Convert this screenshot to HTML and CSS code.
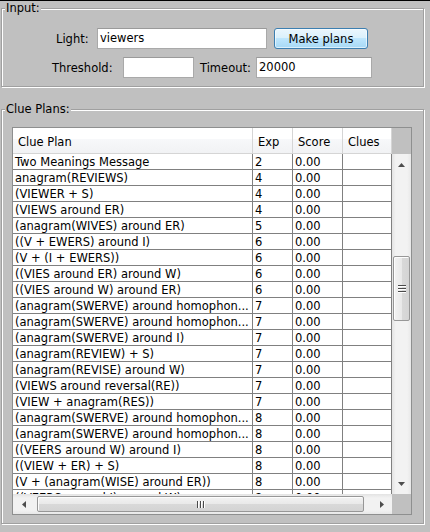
FILE: index.html
```html
<!DOCTYPE html>
<html>
<head>
<meta charset="utf-8">
<title>Clue Plans</title>
<link rel="stylesheet" href="styles.css">
</head>
<body>
<div class="window">
  <div class="group input-group">
    <span class="group-title">Input:</span>
    <div class="form-row row1">
      <span class="lbl lbl-light">Light:</span>
      <div class="field f-light">viewers</div>
      <button class="btn">Make plans</button>
    </div>
    <div class="form-row row2">
      <span class="lbl lbl-threshold">Threshold:</span>
      <div class="field f-threshold"></div>
      <span class="lbl lbl-timeout">Timeout:</span>
      <div class="field f-timeout">20000</div>
    </div>
  </div>

  <div class="group plans-group">
    <span class="group-title">Clue Plans:</span>
    <div class="scrollpane">
      <div class="thead">
        <div class="th">Clue Plan</div>
        <div class="th">Exp</div>
        <div class="th">Score</div>
        <div class="th">Clues</div>
      </div>
      <div class="corner"></div>
      <div class="viewport">
        <div class="tr"><div class="td">Two Meanings Message</div><div class="td">2</div><div class="td">0.00</div><div class="td"></div></div>
        <div class="tr"><div class="td">anagram(REVIEWS)</div><div class="td">4</div><div class="td">0.00</div><div class="td"></div></div>
        <div class="tr"><div class="td">(VIEWER + S)</div><div class="td">4</div><div class="td">0.00</div><div class="td"></div></div>
        <div class="tr"><div class="td">(VIEWS around ER)</div><div class="td">4</div><div class="td">0.00</div><div class="td"></div></div>
        <div class="tr"><div class="td">(anagram(WIVES) around ER)</div><div class="td">5</div><div class="td">0.00</div><div class="td"></div></div>
        <div class="tr"><div class="td">((V + EWERS) around I)</div><div class="td">6</div><div class="td">0.00</div><div class="td"></div></div>
        <div class="tr"><div class="td">(V + (I + EWERS))</div><div class="td">6</div><div class="td">0.00</div><div class="td"></div></div>
        <div class="tr"><div class="td">((VIES around ER) around W)</div><div class="td">6</div><div class="td">0.00</div><div class="td"></div></div>
        <div class="tr"><div class="td">((VIES around W) around ER)</div><div class="td">6</div><div class="td">0.00</div><div class="td"></div></div>
        <div class="tr"><div class="td">(anagram(SWERVE) around homophon...</div><div class="td">7</div><div class="td">0.00</div><div class="td"></div></div>
        <div class="tr"><div class="td">(anagram(SWERVE) around homophon...</div><div class="td">7</div><div class="td">0.00</div><div class="td"></div></div>
        <div class="tr"><div class="td">(anagram(SWERVE) around I)</div><div class="td">7</div><div class="td">0.00</div><div class="td"></div></div>
        <div class="tr"><div class="td">(anagram(REVIEW) + S)</div><div class="td">7</div><div class="td">0.00</div><div class="td"></div></div>
        <div class="tr"><div class="td">(anagram(REVISE) around W)</div><div class="td">7</div><div class="td">0.00</div><div class="td"></div></div>
        <div class="tr"><div class="td">(VIEWS around reversal(RE))</div><div class="td">7</div><div class="td">0.00</div><div class="td"></div></div>
        <div class="tr"><div class="td">(VIEW + anagram(RES))</div><div class="td">7</div><div class="td">0.00</div><div class="td"></div></div>
        <div class="tr"><div class="td">(anagram(SWERVE) around homophon...</div><div class="td">8</div><div class="td">0.00</div><div class="td"></div></div>
        <div class="tr"><div class="td">(anagram(SWERVE) around homophon...</div><div class="td">8</div><div class="td">0.00</div><div class="td"></div></div>
        <div class="tr"><div class="td">((VEERS around W) around I)</div><div class="td">8</div><div class="td">0.00</div><div class="td"></div></div>
        <div class="tr"><div class="td">((VIEW + ER) + S)</div><div class="td">8</div><div class="td">0.00</div><div class="td"></div></div>
        <div class="tr"><div class="td">(V + (anagram(WISE) around ER))</div><div class="td">8</div><div class="td">0.00</div><div class="td"></div></div>
        <div class="tr"><div class="td">((VEERS around I) around W)</div><div class="td">8</div><div class="td">0.00</div><div class="td"></div></div>
      </div>
      <div class="vscroll">
        <div class="sb-btn">
          <svg width="7" height="4" viewBox="0 0 7 4"><polygon points="0,4 3.5,0 7,4" fill="#4d4d4d"/></svg>
        </div>
        <div class="v-before"></div>
        <div class="thumb v-thumb">
          <div class="grip-v"><span></span><span></span><span></span></div>
        </div>
        <div class="sb-fill"></div>
        <div class="sb-btn">
          <svg width="7" height="4" viewBox="0 0 7 4"><polygon points="0,0 7,0 3.5,4" fill="#4d4d4d"/></svg>
        </div>
      </div>
      <div class="hscroll">
        <div class="sb-btn">
          <svg width="4" height="7" viewBox="0 0 4 7"><polygon points="4,0 4,7 0,3.5" fill="#4d4d4d"/></svg>
        </div>
        <div class="h-before"></div>
        <div class="thumb h-thumb">
          <div class="grip-h"><span></span><span></span><span></span></div>
        </div>
        <div class="sb-fill"></div>
        <div class="sb-btn">
          <svg width="4" height="7" viewBox="0 0 4 7"><polygon points="0,0 4,3.5 0,7" fill="#4d4d4d"/></svg>
        </div>
      </div>
      <div class="corner"></div>
    </div>
  </div>
</div>
</body>
</html>
```

FILE: styles.css
```css
* {
  box-sizing: border-box;
}

body {
  margin: 0;
  font-family: "DejaVu Sans", "Liberation Sans", sans-serif;
  font-size: 11.5px;
  color: #000;
}

.window {
  width: 430px;
  height: 532px;
  background: #c0c0c0;
  border-top: 1px solid #000;
  padding: 7px 0 0 1px;
  overflow: hidden;
}

.group {
  position: relative;
  width: 423px;
  border: 1px solid #a0a0a0;
  box-shadow: inset 1px 1px 0 #fff, 1px 1px 0 #fff;
}

.group-title {
  position: absolute;
  top: -8px;
  left: 3px;
  padding: 0 1px;
  background: #c0c0c0;
  line-height: 14px;
}

.input-group {
  height: 79px;
  padding-top: 19px;
}

.form-row {
  display: flex;
  align-items: center;
  height: 21px;
}

.row2 {
  margin-top: 8px;
}

.lbl {
  white-space: nowrap;
}

.lbl-light {
  margin-left: 54px;
  width: 41px;
}

.lbl-threshold {
  margin-left: 50px;
  width: 71px;
}

.lbl-timeout {
  margin-left: 6px;
  width: 56px;
}

.field {
  height: 21px;
  background: #fff;
  border: 1px solid #a9a9a9;
  border-top-color: #9a9a9a;
  padding-left: 2px;
  line-height: 19px;
  white-space: nowrap;
}

.f-light {
  width: 170px;
}

.f-threshold {
  width: 71px;
}

.f-timeout {
  width: 116px;
}

.btn {
  margin-left: 7px;
  width: 94px;
  height: 21px;
  padding: 0;
  font: inherit;
  color: #000;
  border: 1px solid #3c7fb1;
  border-radius: 3px;
  background: linear-gradient(#eaf6fd 0%, #d9f0fc 50%, #bee6fd 50%, #a7d9f5 100%);
  box-shadow: inset 0 0 0 1px rgba(255, 255, 255, 0.6);
}

.plans-group {
  margin-top: 22px;
  height: 415px;
  padding: 17px 0 0 10px;
}

.scrollpane {
  width: 400px;
  height: 388px;
  border: 1px solid #8e8f8f;
  display: grid;
  grid-template-columns: 379px 19px;
  grid-template-rows: 26px 340px 20px;
  background: #c0c0c0;
}

.thead,
.tr {
  display: grid;
  grid-template-columns: 240px 40px 50px 49px;
}

.th {
  border-right: 1px solid #d5d5d5;
  border-bottom: 1px solid #d5d5d5;
  background: linear-gradient(#ffffff 0%, #ffffff 45%, #f7f8fa 45%, #f1f2f4 100%);
  padding: 3px 0 0 5px;
  line-height: 22px;
  white-space: nowrap;
  overflow: hidden;
}

.corner {
  background: #c0c0c0;
}

.viewport {
  overflow: hidden;
  background: #fff;
}

.td {
  height: 16px;
  border-right: 1px solid #808080;
  border-bottom: 1px solid #808080;
  padding: 1px 0 0 2px;
  line-height: 14px;
  white-space: nowrap;
  overflow: hidden;
  background: #fff;
}

.vscroll {
  display: flex;
  flex-direction: column;
  background: linear-gradient(to right, #e3e3e3 0%, #f2f2f2 20%, #f2f2f2 80%, #e8e8e8 100%);
}

.hscroll {
  display: flex;
  flex-direction: row;
  align-items: flex-start;
  padding-top: 2px;
  background: linear-gradient(#e3e3e3 0%, #f2f2f2 20%, #f2f2f2 80%, #e8e8e8 100%);
}

.sb-btn {
  display: flex;
  align-items: center;
  justify-content: center;
  flex: none;
}

.vscroll .sb-btn {
  height: 21px;
}

.hscroll .sb-btn {
  width: 21px;
  height: 16px;
}

.sb-btn svg {
  display: block;
}

.v-before {
  height: 81px;
  flex: none;
}

.h-before {
  width: 3px;
  flex: none;
}

.sb-fill {
  flex: 1;
}

.thumb {
  flex: none;
  border: 1px solid #979797;
  border-radius: 2px;
  display: flex;
  align-items: center;
  justify-content: center;
}

.v-thumb {
  width: 17px;
  height: 65px;
  margin-left: 1px;
  background: linear-gradient(to right, #f3f3f3 0%, #e9e9e9 50%, #d9d9d9 50%, #d4d4d4 100%);
  box-shadow: inset 1px 1px 0 #fdfdfd;
}

.h-thumb {
  width: 327px;
  height: 16px;
  background: linear-gradient(#f3f3f3 0%, #e9e9e9 50%, #d9d9d9 50%, #d4d4d4 100%);
  box-shadow: inset 1px 1px 0 #fdfdfd;
}

.grip-v {
  display: flex;
  flex-direction: column;
  gap: 2px;
}

.grip-v span {
  display: block;
  width: 8px;
  height: 1px;
  background: #4a4a4a;
  box-shadow: 0 1px 0 #ffffff;
}

.grip-h {
  display: flex;
  flex-direction: row;
  gap: 2px;
}

.grip-h span {
  display: block;
  width: 1px;
  height: 7px;
  background: #4a4a4a;
  box-shadow: 1px 0 0 #ffffff;
}
```
